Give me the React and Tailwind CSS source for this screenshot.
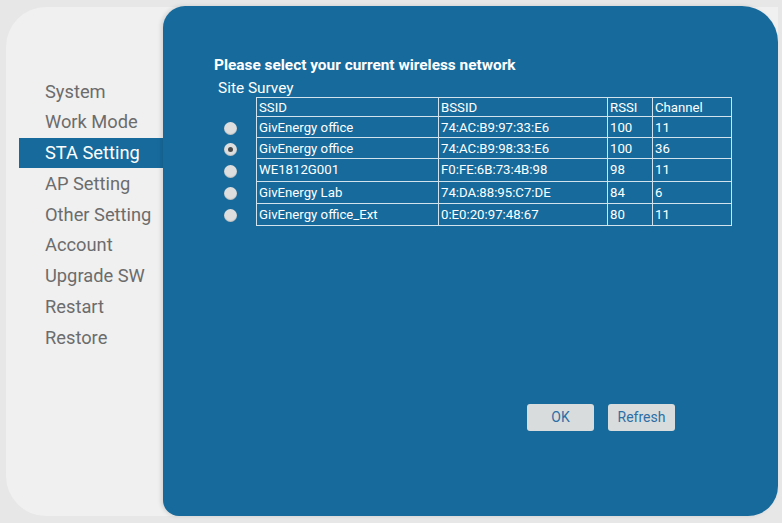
const MENU = ['System', 'Work Mode', 'STA Setting', 'AP Setting', 'Other Setting', 'Account', 'Upgrade SW', 'Restart', 'Restore'];

const NETWORKS = [
  { ssid: 'GivEnergy office', bssid: '74:AC:B9:97:33:E6', rssi: '100', channel: '11', h: 'h-[21px]' },
  { ssid: 'GivEnergy office', bssid: '74:AC:B9:98:33:E6', rssi: '100', channel: '36', h: 'h-[21px]', selected: true },
  { ssid: 'WE1812G001', bssid: 'F0:FE:6B:73:4B:98', rssi: '98', channel: '11', h: 'h-[22px]' },
  { ssid: 'GivEnergy Lab', bssid: '74:DA:88:95:C7:DE', rssi: '84', channel: '6', h: 'h-[22px]' },
  { ssid: 'GivEnergy office_Ext', bssid: '0:E0:20:97:48:67', rssi: '80', channel: '11', h: 'h-[22px]' },
];

function Radio({ selected }) {
  return (
    <div className="flex h-[13px] w-[13px] items-center justify-center rounded-full bg-[#dedede] shadow-[inset_0_-1px_1px_rgba(0,0,0,0.15)]">
      {selected && <div className="h-[5px] w-[5px] rounded-full bg-[#4a4a4a]" />}
    </div>
  );
}

export default function App() {
  const cell = 'border border-[#d3e3ee] px-[2px] text-left align-middle font-normal';
  return (
    <div className="h-[523px] w-[782px] overflow-hidden bg-[#e7e7e7] pt-[7px] pl-[6px] font-['Roboto',sans-serif]">
      <div className="flex h-[509px] w-[772px] rounded-l-[40px] rounded-br-[30px] bg-[#f0f0f0]">
        <nav className="w-[157px] shrink-0 pt-[69px] pl-[13px]">
          {MENU.map((item) => (
            <div
              key={item}
              className={`flex h-[30.75px] items-center pl-[26px] text-[18.3px] ${item === 'STA Setting' ? 'bg-[#176b9c] text-white' : 'text-[#6c6c6c]'}`}
            >
              {item}
            </div>
          ))}
        </nav>
        <main className="-mt-px flex-1 rounded-tl-[22px] rounded-tr-[36px] rounded-br-[30px] rounded-bl-[16px] bg-[#166b9c] pt-[51px] pl-[51px] text-white shadow-[-2px_0_4px_rgba(0,0,0,0.12)]">
          <h1 className="text-[15.4px] leading-[17px] font-bold">Please select your current wireless network</h1>
          <div className="mt-[6px] ml-[4px] text-[15.4px] leading-[17px]">Site Survey</div>
          <div className="flex">
            <div className="w-[42px] pt-[21px] pl-[10px]">
              {NETWORKS.map((n, i) => (
                <div key={i} className={`flex items-center ${n.h}`}>
                  <Radio selected={n.selected} />
                </div>
              ))}
            </div>
            <table className="border-collapse text-[13.2px] leading-[15px]">
              <thead>
                <tr className="h-[19px]">
                  <th className={`${cell} w-[182px]`}>SSID</th>
                  <th className={`${cell} w-[169px]`}>BSSID</th>
                  <th className={`${cell} w-[45px]`}>RSSI</th>
                  <th className={`${cell} w-[79px]`}>Channel</th>
                </tr>
              </thead>
              <tbody>
                {NETWORKS.map((n, i) => (
                  <tr key={i} className={n.h}>
                    <td className={cell}>{n.ssid}</td>
                    <td className={cell}>{n.bssid}</td>
                    <td className={cell}>{n.rssi}</td>
                    <td className={cell}>{n.channel}</td>
                  </tr>
                ))}
              </tbody>
            </table>
          </div>
          <div className="mt-[178px] ml-[313px] flex gap-[14px]">
            <button className="h-[27px] w-[67px] rounded-[3px] bg-[#d8dcdc] text-[14px] text-[#2d6ea6]">OK</button>
            <button className="h-[27px] w-[67px] rounded-[3px] bg-[#d8dcdc] text-[14px] text-[#2d6ea6]">Refresh</button>
          </div>
        </main>
      </div>
    </div>
  );
}
